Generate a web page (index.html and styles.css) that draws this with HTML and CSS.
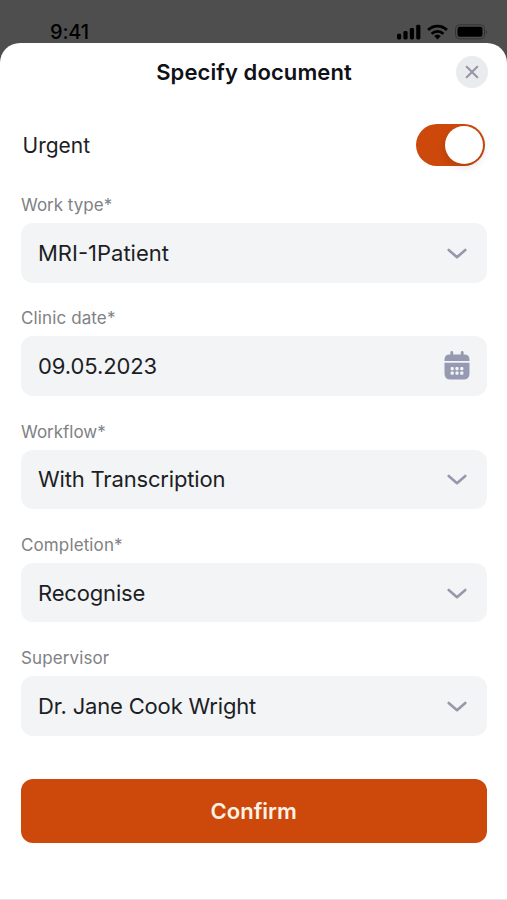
FILE: index.html
```html
<!DOCTYPE html>
<html lang="en">
<head>
<meta charset="utf-8">
<title>Specify document</title>
<link rel="stylesheet" href="styles.css">
</head>
<body>
<div class="screen">
  <div class="status">
    <span class="time">9:41</span>
    <div class="indicators">
      <svg width="24" height="16" viewBox="0 0 24 16"><rect x="0" y="9.8" width="4.2" height="5.6" rx="1.4"/><rect x="6.4" y="7" width="4.2" height="8.4" rx="1.4"/><rect x="12.8" y="4" width="4.2" height="11.4" rx="1.4"/><rect x="19.2" y="0.7" width="4.2" height="14.7" rx="1.4"/></svg>
      <svg width="21" height="16" viewBox="0 0 21 16"><g fill="none" stroke="#000" stroke-width="2.8"><path d="M1.1 6.1a13.2 13.2 0 0 1 18.8 0"/><path d="M4.6 9.9a8.2 8.2 0 0 1 11.8 0"/></g><path d="M10.5 15.5l-3.3-3.4a4.8 4.8 0 0 1 6.6 0z"/></svg>
      <svg width="32" height="16" viewBox="0 0 32 16"><rect x=".5" y=".8" width="29" height="14" rx="4" fill="none" stroke="#343434"/><rect x="2.5" y="2.8" width="25" height="10" rx="2.2"/><path d="M30.8 5.5q2 2.4 0 4.8z" fill="#343434"/></svg>
    </div>
  </div>
  <main class="sheet">
    <header class="header">
      <h1 class="title">Specify document</h1>
      <button class="close" aria-label="Close"><svg width="32" height="32" viewBox="0 0 32 32"><path d="M10.7 10.7l10.6 10.6M21.3 10.7L10.7 21.3"/></svg></button>
    </header>
    <div class="urgent"><span class="urgent-text">Urgent</span><span class="toggle"><span class="knob"></span></span></div>
    <div class="fields">
      <div class="field"><span class="label">Work type*</span><div class="box"><span>MRI-1Patient</span><svg class="chevron" width="20" height="12" viewBox="0 0 20 12"><path d="M1.7 2l8.3 7.2L18.3 2"/></svg></div></div>
      <div class="field"><span class="label wide">Clinic date*</span><div class="box"><span class="snug">09.05.2023</span><svg class="calendar" width="26" height="30" viewBox="0 0 26 30"><path d="M.5 10V8.8Q.5 3.6 5.6 3.6h.8V1.5a1.4 1.4 0 0 1 2.8 0v2.1h7.6V1.5a1.4 1.4 0 0 1 2.8 0v2.1h.8q5.1 0 5.1 5.2V10zM.5 11.8h25v10.8q0 6-6 6h-13q-6 0-6-6z"/><g class="dots"><rect x="6.6" y="16" width="3.2" height="3.2" rx="1"/><rect x="11.4" y="16" width="3.2" height="3.2" rx="1"/><rect x="16.2" y="16" width="3.2" height="3.2" rx="1"/><rect x="6.6" y="20.6" width="3.2" height="3.2" rx="1"/><rect x="11.4" y="20.6" width="3.2" height="3.2" rx="1"/><rect x="16.2" y="20.6" width="3.2" height="3.2" rx="1"/></g></svg></div></div>
      <div class="field"><span class="label">Workflow*</span><div class="box"><span class="tight">With Transcription</span><svg class="chevron" width="20" height="12" viewBox="0 0 20 12"><path d="M1.7 2l8.3 7.2L18.3 2"/></svg></div></div>
      <div class="field"><span class="label wide">Completion*</span><div class="box"><span class="tight">Recognise</span><svg class="chevron" width="20" height="12" viewBox="0 0 20 12"><path d="M1.7 2l8.3 7.2L18.3 2"/></svg></div></div>
      <div class="field"><span class="label wide">Supervisor</span><div class="box"><span class="tight">Dr. Jane Cook Wright</span><svg class="chevron" width="20" height="12" viewBox="0 0 20 12"><path d="M1.7 2l8.3 7.2L18.3 2"/></svg></div></div>
    </div>
    <button class="confirm">Confirm</button>
  </main>
</div>
</body>
</html>
```
FILE: styles.css
```css
* { box-sizing: border-box; }
body { margin: 0; font-family: Inter, "Liberation Sans", sans-serif; color: #1d1e24; background: #4e4e4e; }
button { border: 0; padding: 0; font-family: inherit; }
svg { display: block; }
.screen { height: 900px; overflow: hidden; background: #4e4e4e; }
.status { height: 43px; padding: 23px 20.5px 0 50px; display: flex; justify-content: space-between; align-items: flex-start; color: #000; }
.time { font-size: 20px; line-height: 18px; font-weight: 550; letter-spacing: -.2px; }
.indicators { display: flex; gap: 6.5px; margin-top: 1px; }
.sheet { height: 857px; padding: 0 20.5px 0 21px; background: #fff; border-radius: 20px 20px 0 0; border-bottom: 1px solid #e4e4e4; }
.header { height: 57px; display: grid; grid-template-columns: 32px 1fr 32px; align-items: center; margin-right: -1.5px; }
.title { grid-column: 2; margin: 0 0 0 -1px; text-align: center; font-size: 22px; line-height: 28px; font-weight: 600; letter-spacing: .1px; color: #101116; white-space: nowrap; }
.close { width: 32px; height: 32px; border-radius: 50%; background: #e9ebed; }
.close path { fill: none; stroke: #9297a3; stroke-width: 2; stroke-linecap: round; }
.urgent { height: 90px; display: flex; align-items: center; justify-content: space-between; padding: 0 2px 0 1.5px; }
.urgent-text { font-size: 21px; line-height: 28px; padding-top: 2px; }
.toggle { width: 69px; height: 42px; border-radius: 21px; background: #cd480b; padding: 2px; display: flex; justify-content: flex-end; }
.knob { width: 38px; height: 38px; border-radius: 50%; background: #fff; box-shadow: 0 3px 8px rgba(0,0,0,.13); }
.field { height: 113.3px; }
.label { display: block; width: max-content; height: 33px; padding-top: 4px; font-size: 17px; line-height: 22px; color: #808185; }
.wide { letter-spacing: .12px; }
.box { height: 59.6px; padding: 0 16.5px 0 17px; border-radius: 12px; background: #f2f4f6; display: flex; align-items: center; justify-content: space-between; font-size: 22px; white-space: nowrap; }
.snug { letter-spacing: -.1px; }
.tight { letter-spacing: -.17px; }
.chevron { margin: 2px 3px 0 0; }
.chevron path { fill: none; stroke: #9699ac; stroke-width: 2.6; stroke-linecap: round; stroke-linejoin: round; }
.calendar { fill: #9699b2; }
.dots { fill: #f2f4f6; }
.confirm { display: block; width: 100%; height: 64px; margin-top: 22.5px; border-radius: 12px; background: #cd480b; color: #fff1e4; font-size: 22px; font-weight: 600; }
```
